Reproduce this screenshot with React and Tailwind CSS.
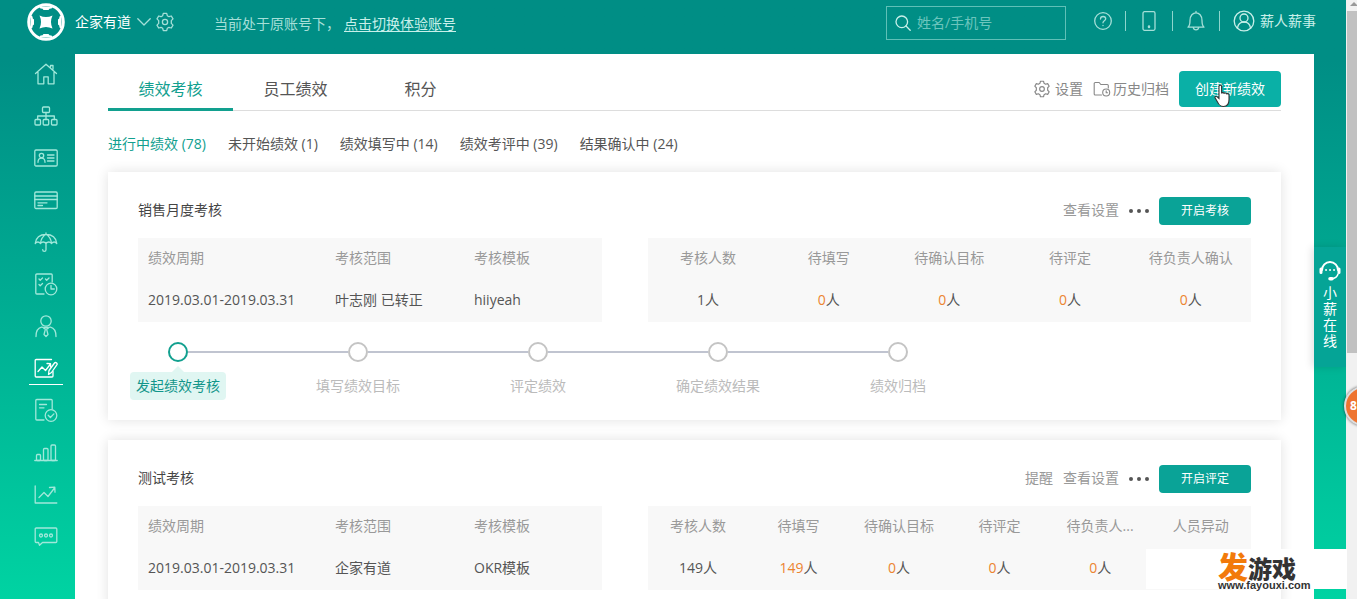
import React from 'react';

const iconProps = {
  fill: 'none',
  stroke: 'currentColor',
  strokeWidth: 1.3,
  strokeLinecap: 'round',
  strokeLinejoin: 'round',
  'aria-hidden': true,
};

const SideIcon = ({ children }) => (
  <svg {...iconProps} viewBox="0 0 24 24" className="w-6 h-6">
    {children}
  </svg>
);

const GearIcon = ({ className }) => (
  <svg {...iconProps} viewBox="0 0 20 20" className={className}>
    <path d="M8.3 1.4h3.4l.6 2.3 1.7 1 2.3-.7 1.7 2.9-1.7 1.7v2.8l1.7 1.7-1.7 2.9-2.3-.7-1.7 1-.6 2.3H8.3l-.6-2.3-1.7-1-2.3.7L2 13.1l1.7-1.7V8.6L2 6.9 3.7 4l2.3.7 1.7-1z" />
    <circle cx="10" cy="10" r="2.6" />
  </svg>
);

const ArchiveIcon = () => (
  <svg {...iconProps} strokeWidth={1.1} viewBox="0 0 18 16" className="w-[18px] h-4">
    <path d="M8.5 14H2.2a1 1 0 0 1-1-1V2.5a1 1 0 0 1 1-1h4l1.6 2h6.5a1 1 0 0 1 1 1V7" />
    <circle cx="13.2" cy="11.5" r="3.5" />
    <path d="M13.2 9.8v1.9h1.4" />
  </svg>
);

const navItems = [
  {
    label: '首页',
    icon: <path d="M1.5 11.5 12 2.2l10.500 9.300M4 10.500v11.300h5.800v-7h4.400v7H20V10.500M16.500 5V3.500h2.500v3.800" />,
  },
  {
    label: '组织',
    icon: (
      <>
        <rect x="8.5" y="3" width="7" height="5.5" rx="1" />
        <rect x="1" y="15.5" width="5.5" height="5.5" rx="1" />
        <rect x="9.2" y="15.5" width="5.5" height="5.5" rx="1" />
        <rect x="17.5" y="15.5" width="5.5" height="5.5" rx="1" />
        <path d="M12 8.5v7M3.7 15.500V12h16.600v3.500" />
      </>
    ),
  },
  {
    label: '档案',
    icon: (
      <>
        <rect x="0.8" y="4" width="22.4" height="16" rx="1.2" />
        <circle cx="7.5" cy="9.5" r="2.2" />
        <path d="M4 16.300c0-5.500 7-5.500 7 0M13.500 9h6.500M13.500 12h6.500M13.500 15h6.500" />
      </>
    ),
  },
  {
    label: '薪酬',
    icon: (
      <>
        <rect x="0.8" y="4" width="22.4" height="16.5" rx="1.2" />
        <path d="M.8 8h22.400M.8 11.500h22.400M4 14.800h9M4 17.500h4.500" />
      </>
    ),
  },
  {
    label: '社保',
    icon: (
      <path d="M1.200 13.500C2 7.500 6.500 4.500 12 4.500s10 3 10.800 9c-1.600-2-3.800-2-5.200 0-1.500-2-4-2-5.600 0-1.600-2-4.100-2-5.600 0-1.400-2-3.600-2-5.200 0zM12 3v1.500M6.400 13.500C7 9 9 6 12 4.500c3 1.500 5 4.500 5.600 9M12 12.500v7.200c0 2.200-3.300 2.200-3.300 0" />
    ),
  },
  {
    label: '考勤',
    icon: (
      <>
        <path d="M10 22H2.800a1 1 0 0 1-1-1V3a1 1 0 0 1 1-1h14.400a1 1 0 0 1 1 1v7" />
        <path d="m5 7 1.200 1.200L8.500 6M11.500 7l1.200 1.200L15 6M5 12.500l1.200 1.200 2.300-2.200" />
        <circle cx="17" cy="17" r="5.8" />
        <path d="M17 13.500V17h3.300" />
      </>
    ),
  },
  {
    label: '员工',
    icon: (
      <>
        <circle cx="12" cy="7" r="5.2" />
        <path d="M2 22.500c0-5.500 2-8.500 5.500-9.300 1-.2 2 .3 2.500 1.300M22 22.500c0-5.500-2-8.500-5.500-9.300-1-.2-2 .3-2.500 1.300M10.500 13.500h3l-.8 2.200 1.300 4.800-2 2-2-2 1.300-4.800z" />
      </>
    ),
  },
  {
    label: '绩效',
    active: true,
    icon: (
      <>
        <path d="M19 15.500V20a1 1 0 0 1-1 1H2.200a1 1 0 0 1-1-1V4.500a1 1 0 0 1 1-1h15.300" />
        <path d="m4 15.500 4-4.500 3.500 3.500 5-6.500M13 7.500l3.500.2.200 3.300" />
        <path d="m14.500 18.500.5-4 5.500-7.500c1-1.200 3.200.2 2.500 1.700l-5.500 7.800z" />
      </>
    ),
  },
  {
    label: '审批',
    icon: (
      <>
        <path d="M10 22H2.800a1 1 0 0 1-1-1V2.500a1 1 0 0 1 1-1h14.400a1 1 0 0 1 1 1V11M5.500 6.500h7M5.500 9.800h4.500" />
        <circle cx="17" cy="17.5" r="5.8" />
        <path d="m14.200 17.300 2.200 2.200 3.500-3.600" />
      </>
    ),
  },
  {
    label: '统计',
    icon: (
      <>
        <path d="M.8 20.500h22.400" />
        <rect x="2.5" y="14.5" width="4" height="6" rx="1" />
        <rect x="9.5" y="8.5" width="4.500" height="12" rx="1" />
        <rect x="17" y="5" width="4.500" height="15.500" rx="1" />
      </>
    ),
  },
  {
    label: '分析',
    icon: <path d="M1.200 4v17h21.600M5 15.500l5-5 4 4L20.500 6M15.500 5.500l5.300-.3.200 5" />,
  },
  {
    label: '消息',
    icon: (
      <>
        <path d="M2.200 4h19.600a1 1 0 0 1 1 1v12.500a1 1 0 0 1-1 1H8.500l-3 2.700-1-2.700H2.200a1 1 0 0 1-1-1V5a1 1 0 0 1 1-1z" />
        <circle cx="7" cy="11.5" r="1.5" />
        <circle cx="12" cy="11.5" r="1.5" />
        <circle cx="17" cy="11.5" r="1.5" />
      </>
    ),
  },
];

const tabs = ['绩效考核', '员工绩效', '积分'];

const filters = ['进行中绩效 (78)', '未开始绩效 (1)', '绩效填写中 (14)', '绩效考评中 (39)', '结果确认中 (24)'];

const reviews = [
  {
    title: '销售月度考核',
    links: ['查看设置'],
    action: '开启考核',
    info: ['2019.03.01-2019.03.31', '叶志刚 已转正', 'hiiyeah'],
    stats: [
      { label: '考核人数', value: 1, plain: true },
      { label: '待填写', value: 0 },
      { label: '待确认目标', value: 0 },
      { label: '待评定', value: 0 },
      { label: '待负责人确认', value: 0 },
    ],
    steps: ['发起绩效考核', '填写绩效目标', '评定绩效', '确定绩效结果', '绩效归档'],
  },
  {
    title: '测试考核',
    links: ['提醒', '查看设置'],
    action: '开启评定',
    info: ['2019.03.01-2019.03.31', '企家有道', 'OKR模板'],
    stats: [
      { label: '考核人数', value: 149, plain: true },
      { label: '待填写', value: 149 },
      { label: '待确认目标', value: 0 },
      { label: '待评定', value: 0 },
      { label: '待负责人...', value: 0 },
      { label: '人员异动' },
    ],
  },
];

const Header = () => (
  <header className="h-[54px] shrink-0 flex items-start text-sm leading-5 text-[#a5dfd8] pr-[30px]">
    {/* Company */}
    <div className="flex items-center h-11 pl-[27px]">
      <svg viewBox="0 0 38 38" className="w-[38px] h-[38px]" aria-hidden="true">
        <circle cx="19" cy="19" r="17.3" fill="none" stroke="#fff" strokeWidth="3" />
        <path
          d="M12 3.500h14l-1.500 2-2 .3-1 1.200h-5l-1-1.200-2-.3zM12 34.500h14l-1.500-2-2-.3-1-1.200h-5l-1 1.200-2 .3zM3.500 12v14l2-1.500.3-2 1.200-1v-5l-1.200-1-.3-2zM34.500 12v14l-2-1.500-.3-2-1.200-1v-5l1.200-1 .3-2z"
          fill="#fff"
        />
        <path d="M12.500 12.500q6.500 3 13 0-3 6.500 0 13-6.500-3-13 0 3-6.500 0-13z" fill="#fff" />
      </svg>
      <button className="flex items-center gap-1.5 ml-2.5 text-white">
        企家有道
        <svg {...iconProps} viewBox="0 0 14 8" className="w-3.5 h-2 text-[#a5dfd8]">
          <path d="m.8.8 6.200 6.200L13.200.8" />
        </svg>
      </button>
      <button aria-label="设置" className="ml-1">
        <GearIcon className="w-5 h-5" />
      </button>
      <p className="ml-[39px] mt-1">
        当前处于原账号下，
        <a href="#switch" className="ml-1 text-[#c8f0ea] underline underline-offset-2">点击切换体验账号</a>
      </p>
    </div>

    {/* Search */}
    <label className="ml-auto mt-1.5 w-[180px] h-[34px] px-2 flex items-center gap-1.5 border border-[#5fc0b7]">
      <svg {...iconProps} viewBox="0 0 16 16" className="w-4 h-4 shrink-0 text-[#c8f0ea]">
        <circle cx="6.8" cy="6.8" r="5.8" />
        <path d="m11 11 4.200 4.200" />
      </svg>
      <input
        type="text"
        aria-label="搜索"
        placeholder="姓名/手机号"
        className="w-full min-w-0 bg-transparent outline-none placeholder:text-[#6cc5bd]"
      />
    </label>

    {/* Tools */}
    <div className="flex items-center h-[42px] ml-[27px]">
      <button aria-label="帮助">
        <svg {...iconProps} viewBox="0 0 20 20" className="w-5 h-5">
          <circle cx="10" cy="10" r="8.3" />
          <path d="M7.500 8c0-3.400 5.200-3.200 5.200-.2 0 2-2.700 2-2.700 4M10 14.300v.2" />
        </svg>
      </button>
      <span className="w-px h-5 mx-3 bg-[#8ed5cd]" />
      <button aria-label="手机">
        <svg {...iconProps} viewBox="0 0 22 22" className="w-[22px] h-[22px]">
          <rect x="5" y="1.7" width="12" height="18.6" rx="1.5" />
          <path d="M11 16.500v.6" strokeWidth="2.5" />
        </svg>
      </button>
      <span className="w-px h-5 mx-3 bg-[#8ed5cd]" />
      <button aria-label="通知">
        <svg {...iconProps} viewBox="0 0 22 22" className="w-[22px] h-[22px]">
          <path d="M11 1.500v1.300M3 17.200c2-1.700 2-3.200 2-6.700 0-10.200 12-10.200 12 0 0 3.500 0 5 2 6.700zM8.300 17.500c.4 3.200 5 3.200 5.400 0" />
        </svg>
      </button>
      <span className="w-px h-5 mx-3 bg-[#8ed5cd]" />
      <button className="flex items-center gap-1 text-[#c8f0ea]">
        <svg {...iconProps} viewBox="0 0 24 24" className="w-6 h-6">
          <circle cx="12" cy="12" r="9.8" />
          <circle cx="12" cy="9" r="4" />
          <path d="M5.500 19c.6-4 3-6 6.500-6s5.900 2 6.500 6" />
        </svg>
        薪人薪事
      </button>
    </div>
  </header>
);

const Sidebar = () => (
  <nav className="w-[75px] shrink-0 pl-[29px] flex flex-col gap-[5px]">
    {navItems.map((item) => (
      <a
        key={item.label}
        href="#nav"
        aria-label={item.label}
        className={`w-[34px] h-[37px] shrink-0 flex justify-center pt-2 ${
          item.active ? 'text-white border-b border-white' : 'text-[#a0e8da]'
        }`}
      >
        <SideIcon>{item.icon}</SideIcon>
      </a>
    ))}
  </nav>
);

const Steps = ({ steps }) => (
  <ol className="flex mt-5 -ml-2">
    {steps.map((step, i) => (
      <li key={step} className={i === steps.length - 1 ? 'w-24' : 'w-[180px]'}>
        <div className="flex items-center">
          <span className={`w-[38px] h-0.5 ${i === 0 ? '' : 'bg-[#c0c4d0]'}`} />
          <span className={`w-5 h-5 rounded-full border-2 ${i === 0 ? 'border-[#12a08f]' : 'border-[#c4c4c4]'}`} />
          {i < steps.length - 1 && <span className="flex-1 h-0.5 bg-[#c0c4d0]" />}
        </div>
        {i === 0 ? (
          <div className="w-24 flex flex-col items-center">
            <svg viewBox="0 0 12 10" className="w-3 h-2.5 text-[#e0f6f2]" aria-hidden="true">
              <path d="M6 4l6 6H0z" fill="currentColor" />
            </svg>
            <p className="w-full h-7 leading-7 text-center rounded bg-[#e0f6f2] text-[#12958a]">{step}</p>
          </div>
        ) : (
          <p className="w-24 mt-2.5 h-7 leading-7 text-center text-[#bbb]">{step}</p>
        )}
      </li>
    ))}
  </ol>
);

const ReviewCard = ({ review }) => (
  <section className="bg-white px-[30px] pt-[25px] pb-5 shadow-[0_0_12px_rgba(0,0,0,0.12)]">
    <div className="flex items-center h-7">
      <h2 className="pb-0.5 text-[#444]">{review.title}</h2>
      <div className="ml-auto flex items-center gap-2.5 text-[#999]">
        {review.links.map((link) => (
          <a key={link} href="#review" className="pb-0.5">{link}</a>
        ))}
        <button aria-label="更多" className="flex gap-1">
          <span className="w-1 h-1 rounded-full bg-[#555]" />
          <span className="w-1 h-1 rounded-full bg-[#555]" />
          <span className="w-1 h-1 rounded-full bg-[#555]" />
        </button>
        <button className="w-[92px] h-7 rounded bg-[#0aa397] text-white text-xs">{review.action}</button>
      </div>
    </div>

    <div className="flex gap-[46px] mt-[13px]">
      <table className="w-5/12 table-fixed bg-[#f8f8f8] text-left">
        <thead>
          <tr className="h-[42px] text-[#999]">
            <th className="w-[197px] pl-2.5 pb-0.5 font-normal">绩效周期</th>
            <th className="w-[139px] pb-0.5 font-normal">考核范围</th>
            <th className="pb-0.5 font-normal">考核模板</th>
          </tr>
        </thead>
        <tbody>
          <tr className="h-[42px] text-[#555]">
            <td className="pl-2.5 pb-0.5">{review.info[0]}</td>
            <td className="pb-0.5">{review.info[1]}</td>
            <td className="pb-0.5">{review.info[2]}</td>
          </tr>
        </tbody>
      </table>
      <div className="flex-1">
        <table className="w-full table-fixed bg-[#f8f8f8] text-center">
          <thead>
            <tr className="h-[42px] text-[#999]">
              {review.stats.map((stat) => (
                <th key={stat.label} className="pb-0.5 font-normal">{stat.label}</th>
              ))}
            </tr>
          </thead>
          <tbody>
            <tr className="h-[42px] text-[#555]">
              {review.stats.map((stat) => (
                <td key={stat.label} className="pb-0.5">
                  {stat.value !== undefined && (
                    <>
                      <span className={stat.plain ? '' : 'text-[#ec8430]'}>{stat.value}</span>人
                    </>
                  )}
                </td>
              ))}
            </tr>
          </tbody>
        </table>
      </div>
    </div>

    {review.steps && <Steps steps={review.steps} />}
  </section>
);

const ChatWidget = () => (
  <button className="mt-[193px] h-[120px] w-8 bg-[#05a496] text-white flex flex-col items-center pt-3 shadow-[-2px_0_8px_rgba(0,0,0,0.12)]">
    <svg viewBox="0 0 22 22" className="w-[22px] h-[22px] mb-1" fill="none" stroke="currentColor" strokeLinecap="round" aria-hidden="true">
      <path d="M3 11a8 8 0 0 1 16 0" strokeWidth="2" />
      <path d="M2 10v3.500M20 10v3.500" strokeWidth="3" />
      <path d="M19 15c-.8 3-3 4.500-6.500 4.700" strokeWidth="1.5" />
      <path d="M11 19.700h2" strokeWidth="3.5" />
      <path d="M7 11h.1M11 11h.1M15 11h.1" strokeWidth="1.8" />
    </svg>
    <span className="w-3.5 text-sm leading-4 break-all">小薪在线</span>
  </button>
);

const App = () => (
  <div className="relative h-screen overflow-hidden flex bg-linear-to-b from-[#008e85] from-10% to-[#00d3a2] text-sm leading-5 font-['Open_Sans','Noto_Sans_CJK_SC',sans-serif]">
    <div className="flex-1 min-w-0 flex flex-col">
      <Header />
      <div className="flex-1 min-h-0 flex">
        <Sidebar />

        <main className="flex-1 min-w-0 overflow-hidden bg-white px-[33px] pt-[13px]">
          {/* Tabs */}
          <div className="flex items-center h-11 border-b border-[#ddd]">
            {tabs.map((tab, i) => (
              <button
                key={tab}
                className={`w-[125px] h-11 text-base ${
                  i === 0 ? 'text-[#12a08f] border-b-3 border-[#12a08f] pt-[3px]' : 'text-[#555]'
                }`}
              >
                {tab}
              </button>
            ))}
            <div className="ml-auto flex items-center gap-2.5 text-[#888]">
              <a href="#settings" className="flex items-center gap-1">
                <GearIcon className="w-[18px] h-[18px]" />
                设置
              </a>
              <a href="#archive" className="flex items-center gap-0.5">
                <ArchiveIcon />
                历史归档
              </a>
              <button className="w-[102px] h-9 rounded bg-[#0ab0a6] text-white">创建新绩效</button>
            </div>
          </div>

          {/* Filters */}
          <div className="flex gap-[22px] pt-[23px] pb-[18px] text-[#555]">
            {filters.map((filter, i) => (
              <button key={filter} className={i === 0 ? 'text-[#12a08f]' : ''}>{filter}</button>
            ))}
          </div>

          <div className="flex flex-col gap-5">
            {reviews.map((review) => (
              <ReviewCard key={review.title} review={review} />
            ))}
          </div>
        </main>

        <div className="w-8 shrink-0">
          <ChatWidget />
        </div>
      </div>
    </div>

    {/* Scrollbar */}
    <div className="w-[11px] shrink-0 bg-[#f1f1f1] flex flex-col items-end">
      <svg viewBox="0 0 10 11" className="w-2.5 h-[11px] text-[#999]" aria-hidden="true">
        <path d="M7 2l4 4H3z" fill="currentColor" />
      </svg>
      <div className="w-2.5 h-[342px] bg-[#c1c1c1]" />
    </div>

    {/* Floating badge */}
    <div className="absolute top-[386px] -right-[27px] w-10 h-10 rounded-full border-2 border-[#ddd] bg-[#ee7430] shadow-[0_0_3px_rgba(0,0,0,0.6)] pl-1 leading-9 text-xs font-bold text-white">
      8
    </div>

    {/* Site mark */}
    <div className="absolute right-2.5 bottom-2.5 w-[201px] h-10 bg-white pl-[72px] pt-1 text-[#333]">
      <p className="flex items-end h-7 font-black">
        <span className="text-3xl leading-7 text-[#f27a0a]">发</span>
        <span className="text-2xl leading-6">游戏</span>
      </p>
      <p className="text-[11px] leading-2 font-bold font-['Liberation_Sans',sans-serif]">www.fayouxi.com</p>
    </div>

    {/* Pointer */}
    <svg viewBox="0 0 18 24" className="absolute top-[84px] right-[125px] w-[18px] h-6" aria-hidden="true">
      <path
        d="M5 2.500c0-1.800 2.600-1.800 2.600 0v7c.2-1.300 2.400-1.200 2.500.2.3-1.200 2.400-1 2.500.5.4-1 2.400-.8 2.400.8v4.500c0 4-1.500 7-5.500 7-3.500 0-4.500-1.500-6-4.500l-2.300-4c-.7-1.500 1-2.300 2-1.200L5 14.500z"
        fill="#fff"
        stroke="#333"
        strokeWidth="1.1"
      />
    </svg>
  </div>
);

export default App;
